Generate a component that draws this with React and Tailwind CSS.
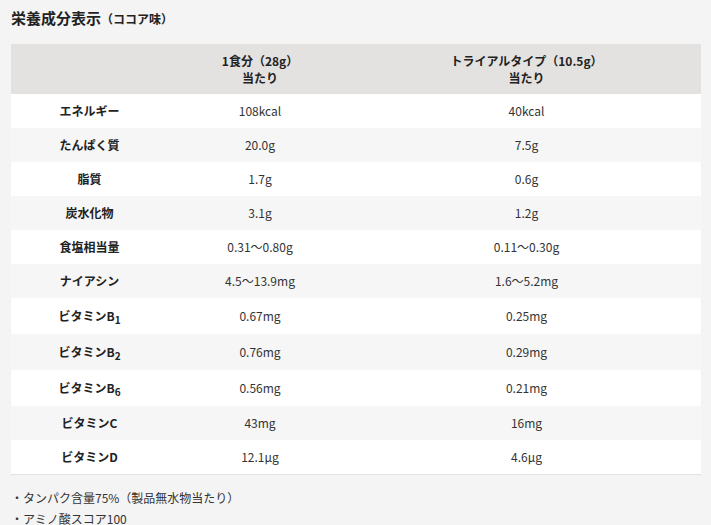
import React from "react";

const rows = [
  ["エネルギー", "108kcal", "40kcal"],
  ["たんぱく質", "20.0g", "7.5g"],
  ["脂質", "1.7g", "0.6g"],
  ["炭水化物", "3.1g", "1.2g"],
  ["食塩相当量", "0.31〜0.80g", "0.11〜0.30g"],
  ["ナイアシン", "4.5〜13.9mg", "1.6〜5.2mg"],
  [["ビタミンB", "1"], "0.67mg", "0.25mg"],
  [["ビタミンB", "2"], "0.76mg", "0.29mg"],
  [["ビタミンB", "6"], "0.56mg", "0.21mg"],
  ["ビタミンC", "43mg", "16mg"],
  ["ビタミンD", "12.1μg", "4.6μg"],
];

export default function App() {
  return (
    <div
      className="min-h-[525px] w-[711px] bg-[#f4f4f4] text-[#333] pl-[11px] pr-[10px] pt-[7px]"
      style={{ fontFamily: '"Noto Sans CJK JP", "Noto Sans", sans-serif' }}
    >
      <h2 className="text-[15px] font-bold leading-[22px] text-[#222]">
        栄養成分表示<span className="text-[12px]">（ココア味）</span>
      </h2>
      <table className="mt-[14px] w-[690px] table-fixed border-collapse text-[12px]">
        <colgroup>
          <col className="w-[157px]" />
          <col className="w-[184px]" />
          <col />
        </colgroup>
        <thead>
          <tr className="bg-[#e4e2e0]">
            <th className="h-[50px]"></th>
            <th className="h-[50px] text-center font-bold leading-[17px] text-[#222]">
              1食分（28g）
              <br />
              当たり
            </th>
            <th className="h-[50px] text-center font-bold leading-[17px] text-[#222]">
              トライアルタイプ（10.5g）
              <br />
              当たり
            </th>
          </tr>
        </thead>
        <tbody>
          {rows.map((r, i) => {
            const isSub = Array.isArray(r[0]);
            const h = isSub ? "h-[36px]" : "h-[34px]";
            return (
              <tr
                key={i}
                className={
                  (i % 2 === 0 ? "bg-white" : "bg-[#f6f6f6]") +
                  (i === rows.length - 1 ? " border-b border-[#e2e2e2]" : "")
                }
              >
                <td className={h + " text-center font-bold text-[#222] leading-[18px]"}>
                  {isSub ? (
                    <span>
                      {r[0][0]}
                      <sub className="text-[10px] leading-none">{r[0][1]}</sub>
                    </span>
                  ) : (
                    r[0]
                  )}
                </td>
                <td className={h + " text-center leading-[18px]"}>{r[1]}</td>
                <td className={h + " text-center leading-[18px]"}>{r[2]}</td>
              </tr>
            );
          })}
        </tbody>
      </table>
      <ul className="mt-[12px] text-[12px] leading-[21px] text-[#333]">
        <li>・タンパク含量75%（製品無水物当たり）</li>
        <li>・アミノ酸スコア100</li>
      </ul>
    </div>
  );
}
